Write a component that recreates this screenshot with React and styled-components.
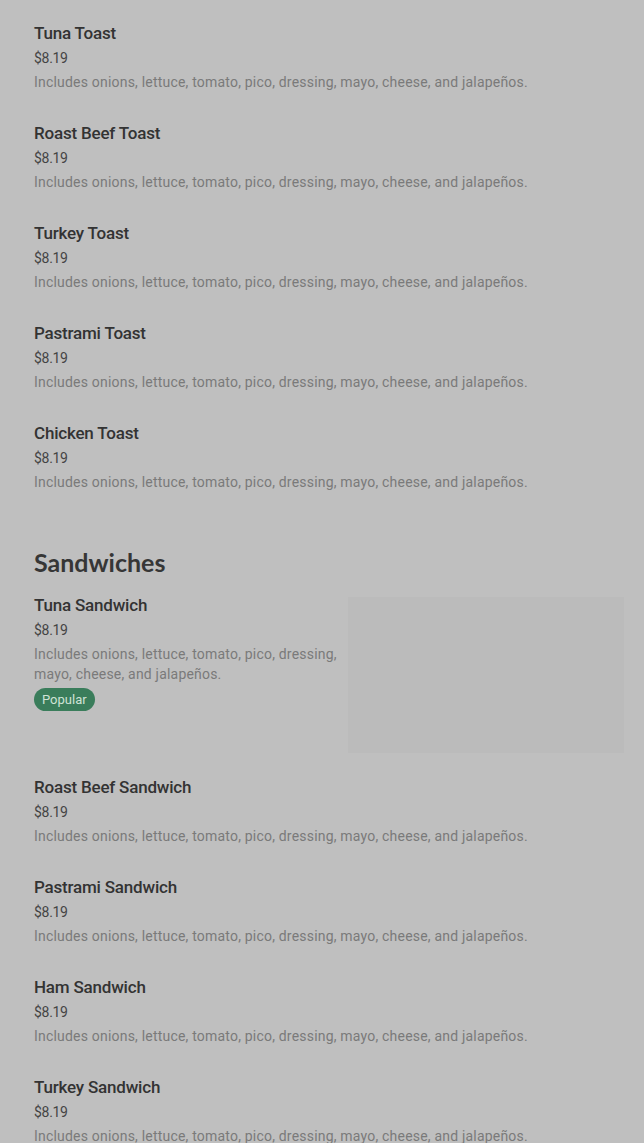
import React from 'react';
import styled, { createGlobalStyle } from 'styled-components';

const GlobalStyle = createGlobalStyle`
  html, body {
    margin: 0;
    padding: 0;
    background: #bfbfbf;
  }
  body {
    font-family: Roboto, "Liberation Sans", sans-serif;
  }
`;

const Page = styled.div`
  padding: 7px 20px 0 34px;
  height: 1143px;
  overflow: hidden;
  box-sizing: border-box;
`;

const Section = styled.section`
  display: flex;
  flex-direction: column;
`;

const SectionTitle = styled.h2`
  margin: 40px 0 2px;
  font-family: Lato, Roboto, sans-serif;
  font-size: 25px;
  line-height: 30px;
  font-weight: 700;
  color: #363636;
`;

const Item = styled.div`
  display: flex;
  gap: 10px;
  padding: ${props => (props.withImage ? '14px 0 8px' : '14px 0 15px')};
`;

const Info = styled.div`
  flex: 1;
  display: flex;
  flex-direction: column;
  align-items: flex-start;
`;

const Name = styled.div`
  font-size: 17px;
  line-height: 24px;
  font-weight: 500;
  letter-spacing: -0.2px;
  color: #333;
`;

const Price = styled.div`
  margin-top: 3px;
  font-size: 14px;
  line-height: 20px;
  letter-spacing: -0.3px;
  color: #444;
`;

const Desc = styled.div`
  margin-top: 4px;
  font-size: 14px;
  line-height: 20px;
  letter-spacing: 0.2px;
  color: #7a7a7a;
`;

const Badge = styled.span`
  margin-top: 4px;
  height: 23px;
  padding: 0 8px;
  display: inline-flex;
  align-items: center;
  border-radius: 12px;
  background: #3a7d5b;
  color: #cfe3d6;
  font-size: 13px;
`;

const Photo = styled.div`
  width: 276px;
  height: 156px;
  margin-top: 4px;
  flex-shrink: 0;
  background: #bbbbbb;
`;

const desc = 'Includes onions, lettuce, tomato, pico, dressing, mayo, cheese, and jalapeños.';

const toasts = ['Tuna Toast', 'Roast Beef Toast', 'Turkey Toast', 'Pastrami Toast', 'Chicken Toast'];
const sandwiches = [
  { name: 'Tuna Sandwich', popular: true, image: true },
  { name: 'Roast Beef Sandwich' },
  { name: 'Pastrami Sandwich' },
  { name: 'Ham Sandwich' },
  { name: 'Turkey Sandwich' },
];

const MenuItem = ({ name, popular, image }) => (
  <Item withImage={image}>
    <Info>
      <Name>{name}</Name>
      <Price>$8.19</Price>
      <Desc>{desc}</Desc>
      {popular && <Badge>Popular</Badge>}
    </Info>
    {image && <Photo />}
  </Item>
);

const App = () => (
  <>
    <GlobalStyle />
    <Page>
      <Section>
        {toasts.map(name => (
          <MenuItem key={name} name={name} />
        ))}
      </Section>
      <Section>
        <SectionTitle>Sandwiches</SectionTitle>
        {sandwiches.map(item => (
          <MenuItem key={item.name} {...item} />
        ))}
      </Section>
    </Page>
  </>
);

export default App;
